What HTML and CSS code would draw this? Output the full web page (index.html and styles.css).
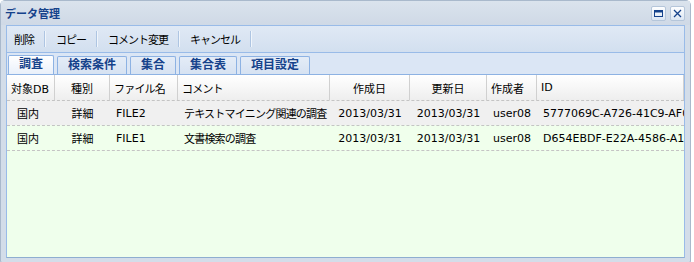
FILE: index.html
```html
<!DOCTYPE html>
<html lang="ja">

<head>
    <meta charset="UTF-8">
    <title>データ管理</title>
    <link rel="stylesheet" href="styles.css">
</head>

<body>
    <div class="win">
        <div class="win-head">
            <span class="win-title">データ管理</span>
            <span class="tools">
                <span class="tool"><svg width="11" height="11" viewBox="0 0 11 11"><rect x="1.5" y="2.5" width="8" height="6" fill="none" stroke="#15428b" stroke-width="1"/><rect x="1.5" y="2.5" width="8" height="2" fill="#15428b"/></svg></span>
                <span class="tool"><svg width="11" height="11" viewBox="0 0 11 11"><path d="M2 2 L9 9 M9 2 L2 9" stroke="#15428b" stroke-width="1.3"/></svg></span>
            </span>
        </div>
        <div class="win-body">
            <div class="tbar">
                <span class="btn">削除</span><i class="sep"></i>
                <span class="btn">コピー</span><i class="sep"></i>
                <span class="btn">コメント変更</span><i class="sep"></i>
                <span class="btn">キャンセル</span><i class="sep"></i>
            </div>
            <div class="tabs">
                <span class="tab active">調査</span>
                <span class="tab">検索条件</span>
                <span class="tab">集合</span>
                <span class="tab">集合表</span>
                <span class="tab">項目設定</span>
            </div>
            <div class="grid">
                <div class="hrow">
                    <div class="c c1">対象DB</div>
                    <div class="c c2 mid">種別</div>
                    <div class="c c3 ja">ファイル名</div>
                    <div class="c c4 ja">コメント</div>
                    <div class="c c5 mid">作成日</div>
                    <div class="c c6 mid">更新日</div>
                    <div class="c c7">作成者</div>
                    <div class="c c8">ID</div>
                </div>
                <div class="row sel">
                    <div class="c c1 pad">国内</div>
                    <div class="c c2 mid">詳細</div>
                    <div class="c c3">FILE2</div>
                    <div class="c c4 ja">テキストマイニング関連の調査</div>
                    <div class="c c5 mid">2013/03/31</div>
                    <div class="c c6 mid">2013/03/31</div>
                    <div class="c c7">user08</div>
                    <div class="c c8">5777069C-A726-41C9-AF04</div>
                </div>
                <div class="row">
                    <div class="c c1 pad">国内</div>
                    <div class="c c2 mid">詳細</div>
                    <div class="c c3">FILE1</div>
                    <div class="c c4 ja">文書検索の調査</div>
                    <div class="c c5 mid">2013/03/31</div>
                    <div class="c c6 mid">2013/03/31</div>
                    <div class="c c7">user08</div>
                    <div class="c c8">D654EBDF-E22A-4586-A1B2</div>
                </div>
            </div>
        </div>
    </div>
</body>

</html>
```

FILE: styles.css
```css
body {
    margin: 0;
    background: #fff;
    font-family: "DejaVu Sans", "Noto Sans CJK JP", sans-serif;
    font-size: 11px;
}

.win {
    width: 679px;
    height: 257px;
    border: 1px solid #a9b9cc;
    border-radius: 5px 5px 2px 2px;
    background: #d3dde9;
    display: flex;
    flex-direction: column;
    padding: 0 5px 4px 5px;
}

.win-head {
    height: 24px;
    display: flex;
    align-items: center;
    justify-content: space-between;
    background: linear-gradient(#dae3ed, #cfd9e6);
    margin: 0 -5px;
    padding: 0 5px 0 4px;
}

.win-title {
    font-weight: bold;
    color: #15428b;
    font-size: 11px;
}

.tools {
    display: flex;
    gap: 4px;
}

.tool {
    width: 13px;
    height: 13px;
    background: linear-gradient(#fdfeff, #dbe6f3);
    border: 1px solid #b5c6da;
    border-radius: 2px;
    display: flex;
    align-items: center;
    justify-content: center;
}

.win-body {
    flex: 1;
    display: flex;
    flex-direction: column;
    border: 1px solid #99bbe8;
    border-bottom-color: #8eaed0;
    background: #efffec;
    min-height: 0;
}

.tbar {
    height: 26px;
    display: flex;
    align-items: center;
    background: linear-gradient(#e0e9f5, #d2dfef);
    border-bottom: 1px solid #99bbe8;
}

.btn {
    padding: 0 7px;
    color: #000;
    letter-spacing: -1px;
}

.sep {
    width: 1px;
    height: 16px;
    background: #aec5e2;
    border-right: 1px solid #f0f5fb;
    margin: 0 3px;
}

.tabs {
    height: 21px;
    display: flex;
    align-items: flex-end;
    gap: 3px;
    background: #dbe6f5;
    border-bottom: 1px solid #8db2e3;
    padding-left: 1px;
}

.tab {
    height: 17px;
    line-height: 17px;
    padding: 0 10px;
    font-size: 12px;
    font-weight: bold;
    color: #15428b;
    border: 1px solid #8db2e3;
    border-bottom: none;
    border-radius: 2px 2px 0 0;
    background: linear-gradient(#e4ecf7, #d6e2f2);
}

.tab.active {
    background: linear-gradient(#ffffff, #e9f0fa);
    height: 18px;
}

.grid {
    flex: 1;
    background: #efffec;
}

.hrow {
    height: 25px;
    display: flex;
    align-items: stretch;
    background: linear-gradient(#ffffff, #eeeeee);
}

.hrow .c {
    border-right: 1px solid #d0d0d0;
    padding-left: 4px;
}

.hrow .c.mid {
    padding-left: 0;
}

.row {
    height: 24px;
    display: flex;
    align-items: stretch;
    border-top: 1px dashed #c4c4c4;
    background: #f0ffec;
}

.row:last-child {
    border-bottom: 1px dashed #c4c4c4;
}

.row.sel {
    background: #f0f0f0;
}

.c {
    display: flex;
    align-items: center;
    box-sizing: border-box;
    white-space: nowrap;
    overflow: hidden;
    padding-left: 6px;
}

.c.mid {
    justify-content: center;
    padding-left: 0;
}

.ja {
    letter-spacing: -0.8px;
}

.c1 { width: 48px; }
.c1.pad { padding-left: 10px; }
.c2 { width: 55px; }
.c3 { width: 68px; }
.c4 { width: 152px; }
.c5 { width: 80px; }
.c6 { width: 77px; }
.c7 { width: 50px; }
.c8 { flex: 1; }
```
